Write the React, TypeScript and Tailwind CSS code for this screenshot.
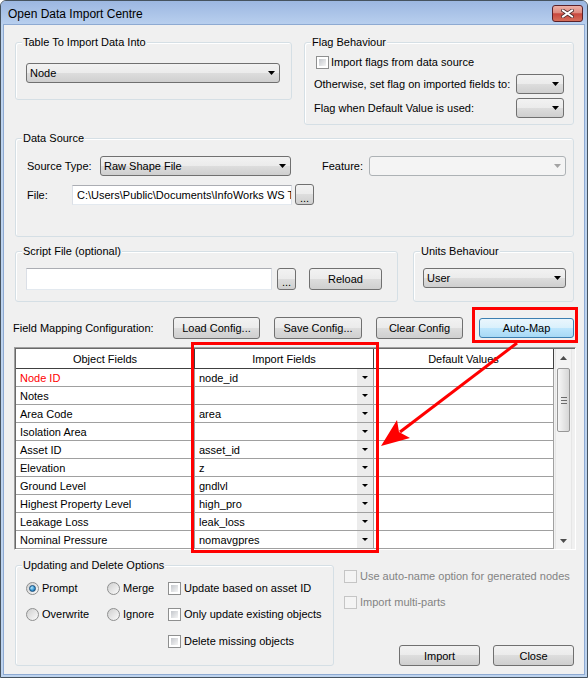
import React from "react";

type Kids = { className?: string; children?: React.ReactNode };

const rows: Array<[string, string, boolean?]> = [
  ["Node ID", "node_id", true],
  ["Notes", ""],
  ["Area Code", "area"],
  ["Isolation Area", ""],
  ["Asset ID", "asset_id"],
  ["Elevation", "z"],
  ["Ground Level", "gndlvl"],
  ["Highest Property Level", "high_pro"],
  ["Leakage Loss", "leak_loss"],
  ["Nominal Pressure", "nomavgpres"],
];

function Tri({ up, color = "#000" }: { up?: boolean; color?: string }) {
  return (
    <svg width="7" height="4" viewBox="0 0 7 4" className="block shrink-0">
      <path d={up ? "M0 4h7L3.5 0z" : "M0 0h7L3.5 4z"} fill={color} />
    </svg>
  );
}

function Group({ title, className = "", children }: Kids & { title: string }) {
  return (
    <div className={`shrink-0 rounded-[3px] border border-[#d5dfe5] shadow-[inset_1px_1px_0_#fff] ${className}`}>
      <div className="-mt-[8px] ml-[6px] w-fit bg-[#f0f0f0] px-[1px] leading-[14px]">{title}</div>
      {children}
    </div>
  );
}

function Combo({ className = "", text = "", disabled }: { className?: string; text?: string; disabled?: boolean }) {
  return (
    <div
      className={`flex h-[20px] shrink-0 items-center rounded-[3px] border pl-[3px] pr-[4px] ${
        disabled
          ? "border-[#adb2b5] bg-[#f4f4f4]"
          : "border-[#707070] bg-[linear-gradient(#f2f2f2,#ebebeb_50%,#dddddd_50%,#cfcfcf)]"
      } ${className}`}
    >
      <span className="flex-1 truncate">{text}</span>
      <Tri color={disabled ? "#a3a3a3" : "#000"} />
    </div>
  );
}

function Btn({ className = "", children, hot }: Kids & { hot?: boolean }) {
  return (
    <button
      type="button"
      className={`flex shrink-0 items-center justify-center rounded-[3px] border ${
        hot
          ? "border-[#3c7fb1] bg-[linear-gradient(#eaf6fd,#d9f0fc_50%,#bee6fd_50%,#a7d9f5)]"
          : "border-[#707070] bg-[linear-gradient(#f2f2f2,#ebebeb_50%,#dddddd_50%,#cfcfcf)]"
      } ${className}`}
    >
      {children}
    </button>
  );
}

function Check({ disabled }: { disabled?: boolean }) {
  if (disabled) return <span className="block h-[13px] w-[13px] shrink-0 border border-[#c5c5c5] bg-[#f4f4f4]" />;
  return (
    <span className="block h-[13px] w-[13px] shrink-0 border border-[#8e8f8f] bg-white p-[2px]">
      <span className="block h-full w-full bg-[linear-gradient(135deg,#c4c7cc,#f5f5f5)]" />
    </span>
  );
}

function Radio({ checked }: { checked?: boolean }) {
  return (
    <span className="flex h-[13px] w-[13px] shrink-0 items-center justify-center rounded-full border border-[#8e8f8f] bg-[linear-gradient(135deg,#cfcfcf,#fbfbfb)]">
      {checked && (
        <span className="h-[7px] w-[7px] rounded-full border border-[#1b4f7c] bg-[radial-gradient(circle_at_35%_35%,#b5e8fc,#2f8fcf_60%,#16507f)]" />
      )}
    </span>
  );
}

function TextBox({ className = "", children }: Kids) {
  return (
    <div
      className={`flex shrink-0 items-center overflow-hidden whitespace-nowrap border border-[#abadb3] border-x-[#dbdfe6] border-b-[#e3e9ef] bg-white pl-[4px] ${className}`}
    >
      {children}
    </div>
  );
}

function Grid() {
  return (
    <div className="ml-[10px] mt-[8px] flex h-[203px] w-[562px] border border-[#a0a0a0] border-b-white border-r-white">
      <div className="flex flex-1 border-l border-t border-[#696969]">
        <div className="flex w-[538px] flex-col bg-white">
          <div className="flex h-[20px] border-b border-[#404040]">
            <div className="flex w-[179px] items-center justify-center border-r border-[#404040]">Object Fields</div>
            <div className="flex w-[179px] items-center justify-center border-r border-[#404040]">Import Fields</div>
            <div className="flex w-[180px] items-center justify-center border-r border-[#404040]">Default Values</div>
          </div>
          {rows.map(([name, imp, key]) => (
            <div key={name} className="flex h-[18px] border-b border-[#a0a0a0]">
              <div className={`flex w-[179px] items-center border-r border-[#a0a0a0] pl-[4px] ${key ? "text-[#ff0000]" : ""}`}>
                {name}
              </div>
              <div className="flex w-[179px] items-center border-r border-[#a0a0a0]">
                <span className="flex-1 pl-[4px]">{imp}</span>
                <span className="flex h-full w-[16px] items-center justify-center bg-[#ececec]">
                  <svg width="6" height="3" viewBox="0 0 6 3" className="block">
                    <path d="M0 0h6L3 3z" fill="#000" />
                  </svg>
                </span>
              </div>
              <div className="w-[180px] border-r border-[#a0a0a0]" />
            </div>
          ))}
        </div>
        <div className="flex w-[20px] bg-[#f0f0f0]">
          <div className="ml-[1px] flex w-[17px] flex-col border-x border-[#e6e6e6] bg-[#f3f3f3]">
            <div className="flex h-[17px] items-center justify-center">
              <Tri up color="#4d4d4d" />
            </div>
            <div className="mx-[1px] mt-[2px] flex h-[64px] flex-col items-center justify-center gap-[2px] rounded-[2px] border border-[#979797] bg-[linear-gradient(90deg,#f6f6f6,#e6e6e6_50%,#d6d6d6)]">
              <span className="h-px w-[6px] bg-[#6b6b6b]" />
              <span className="h-px w-[6px] bg-[#6b6b6b]" />
              <span className="h-px w-[6px] bg-[#6b6b6b]" />
            </div>
            <div className="flex-1" />
            <div className="flex h-[17px] items-center justify-center">
              <Tri color="#4d4d4d" />
            </div>
          </div>
        </div>
      </div>
    </div>
  );
}

export default function App() {
  return (
    <div className="h-[678px] w-[588px] overflow-hidden rounded-t-[6px] border border-[#46535f] bg-[#bdd3ee] font-['Liberation_Sans',Arial,sans-serif] text-[11px] leading-[14px] text-black">
      <div className="flex h-[23px] bg-[linear-gradient(#9cb7e1,#b8cfee)]">
        <div className="pl-[7px] pt-[6px] text-[12px] leading-[15px]">Open Data Import Centre</div>
        <button
          type="button"
          className="ml-auto mr-[4px] mt-[4px] flex h-[17px] w-[31px] items-center justify-center rounded-[3px] border border-[#5a2129] bg-[linear-gradient(#eeb0a6,#de8a7e_45%,#c8473d_52%,#d66e5a)]"
        >
          <svg width="13" height="9" viewBox="0 0 13 9" className="block">
            <path d="M2 1.5L11 7.5M11 1.5L2 7.5" stroke="#4a2a2a" strokeWidth="3.6" strokeLinecap="square" />
            <path d="M2 1.5L11 7.5M11 1.5L2 7.5" stroke="#fff" strokeWidth="2" strokeLinecap="square" />
          </svg>
        </button>
      </div>

      <div className="relative mx-[2px] h-[651px] border border-[#8eaad2] bg-[#f0f0f0]">
        <div className="mt-[17px] flex items-start">
          <Group title="Table To Import Data Into" className="ml-[11px] h-[58px] w-[277px]">
            <Combo className="ml-[10px] mt-[14px] w-[254px]" text="Node" />
          </Group>
          <Group title="Flag Behaviour" className="ml-[12px] h-[83px] w-[270px]">
            <div className="ml-[11px] mt-[6px] flex h-[14px] items-center">
              <Check />
              <span className="ml-[2px]">Import flags from data source</span>
            </div>
            <div className="mt-[5px] flex h-[20px] items-center">
              <span className="ml-[9px]">Otherwise, set flag on imported fields to:</span>
              <Combo className="ml-auto mr-[9px] w-[48px]" />
            </div>
            <div className="mt-[4px] flex h-[20px] items-center">
              <span className="ml-[9px]">Flag when Default Value is used:</span>
              <Combo className="ml-auto mr-[9px] w-[48px]" />
            </div>
          </Group>
        </div>

        <div className="mt-[13px] flex">
          <Group title="Data Source" className="ml-[11px] h-[99px] w-[559px]">
            <div className="mt-[11px] flex h-[20px] items-center">
              <span className="ml-[11px] w-[73px] shrink-0">Source Type:</span>
              <Combo className="w-[191px]" text="Raw Shape File" />
              <span className="ml-[31px] w-[47px] shrink-0">Feature:</span>
              <Combo className="w-[197px]" disabled />
            </div>
            <div className="mt-[8px] flex h-[21px] items-center">
              <span className="ml-[11px] w-[45px] shrink-0">File:</span>
              <TextBox className="h-[20px] w-[220px]">{"C:\\Users\\Public\\Documents\\InfoWorks WS T"}</TextBox>
              <Btn className="ml-[3px] h-[21px] w-[19px] items-end pb-[2px] leading-[8px]">...</Btn>
            </div>
          </Group>
        </div>

        <div className="mt-[14px] flex">
          <Group title="Script File (optional)" className="ml-[11px] h-[51px] w-[383px]">
            <div className="ml-[10px] mt-[10px] flex">
              <TextBox className="h-[22px] w-[246px]" />
              <Btn className="ml-[5px] h-[22px] w-[19px] items-end pb-[3px] leading-[8px]">...</Btn>
              <Btn className="ml-[13px] h-[22px] w-[73px]">Reload</Btn>
            </div>
          </Group>
          <Group title="Units Behaviour" className="ml-[15px] h-[51px] w-[161px]">
            <Combo className="ml-[9px] mt-[10px] w-[143px]" text="User" />
          </Group>
        </div>

        <div className="mt-[15px] flex h-[22px] items-center">
          <span className="ml-[9px] w-[160px] shrink-0">Field Mapping Configuration:</span>
          <Btn className="h-[22px] w-[87px]">Load Config...</Btn>
          <Btn className="ml-[14px] h-[22px] w-[88px]">Save Config...</Btn>
          <Btn className="ml-[14px] h-[22px] w-[87px]">Clear Config</Btn>
          <Btn hot className="ml-[16px] h-[20px] w-[95px]">Auto-Map</Btn>
        </div>

        <Grid />

        <div className="mt-[15px] flex items-start">
          <Group title="Updating and Delete Options" className="ml-[11px] h-[101px] w-[319px]">
            <div className="ml-[10px] mt-[8px] flex h-[16px] items-center">
              <div className="flex w-[81px] items-center">
                <Radio checked />
                <span className="ml-[3px]">Prompt</span>
              </div>
              <div className="flex w-[61px] items-center">
                <Radio />
                <span className="ml-[3px]">Merge</span>
              </div>
              <div className="flex items-center">
                <Check />
                <span className="ml-[3px]">Update based on asset ID</span>
              </div>
            </div>
            <div className="ml-[10px] mt-[10px] flex h-[16px] items-center">
              <div className="flex w-[81px] items-center">
                <Radio />
                <span className="ml-[3px]">Overwrite</span>
              </div>
              <div className="flex w-[61px] items-center">
                <Radio />
                <span className="ml-[3px]">Ignore</span>
              </div>
              <div className="flex items-center">
                <Check />
                <span className="ml-[3px]">Only update existing objects</span>
              </div>
            </div>
            <div className="ml-[152px] mt-[11px] flex h-[16px] items-center">
              <Check />
              <span className="ml-[3px]">Delete missing objects</span>
            </div>
          </Group>
          <div className="ml-[10px] flex flex-col">
            <div className="mt-[3px] flex h-[16px] items-center text-[#838383]">
              <Check disabled />
              <span className="ml-[3px]">Use auto-name option for generated nodes</span>
            </div>
            <div className="mt-[10px] flex h-[16px] items-center text-[#838383]">
              <Check disabled />
              <span className="ml-[3px]">Import multi-parts</span>
            </div>
            <div className="mt-[35px] flex">
              <Btn className="ml-[55px] h-[21px] w-[81px]">Import</Btn>
              <Btn className="ml-[13px] h-[21px] w-[81px]">Close</Btn>
            </div>
          </div>
        </div>

        {/* annotation overlays */}
        <div className="pointer-events-none absolute left-[468px] top-[282px] h-[36px] w-[106px] border-[3px] border-[#ff0000]" />
        <div className="pointer-events-none absolute left-[187px] top-[317px] h-[211px] w-[188px] border-[3px] border-[#ff0000]" />
        <svg className="pointer-events-none absolute left-0 top-0" width="580" height="649">
          <line x1="513" y1="318" x2="396" y2="407" stroke="#ff0000" strokeWidth="3" />
          <path d="M377 421L406 413L395 407L393 395z" fill="#ff0000" />
        </svg>
      </div>
    </div>
  );
}
